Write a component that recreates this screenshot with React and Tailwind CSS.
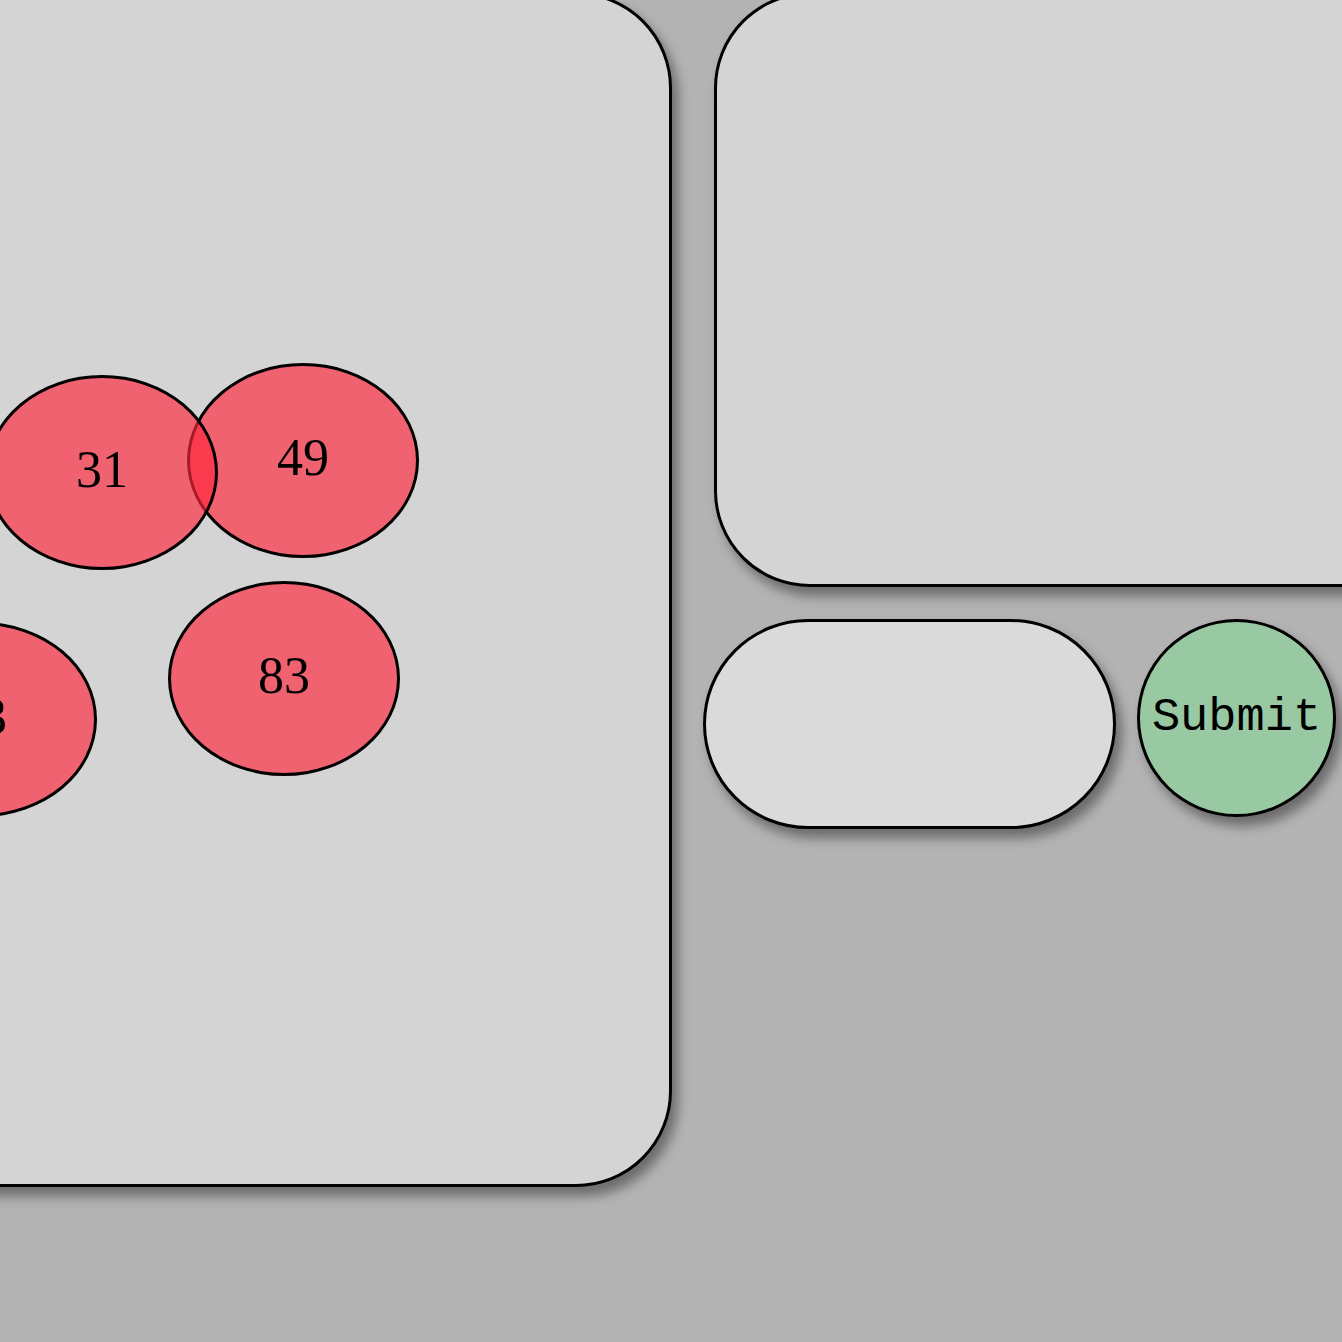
import React from "react";

const bubbles = [
  { id: "a", label: "23", left: 12, top: 627 },
  { id: "b", label: "83", left: 315, top: 586 },
  { id: "c", label: "49", left: 334, top: 368 },
  { id: "d", label: "31", left: 133, top: 380 },
];

export default function App() {
  return (
    <div className="w-[1342px] h-[1342px] overflow-hidden bg-[#b3b3b3]">
      <div className="flex items-start gap-[31px] -ml-[150px] -mt-[8px]">
        {/* board */}
        <div className="relative shrink-0 w-[822px] h-[1195px] rounded-[96px] border-[3px] border-black bg-[#d4d4d4] shadow-[6px_9px_12px_rgba(0,0,0,0.4)]">
          {bubbles.map((b) => (
            <div
              key={b.id}
              className="absolute w-[232px] h-[195px] rounded-[50%] border-[3px] border-black bg-[rgba(255,40,60,0.66)] flex items-center justify-center pb-[6px] text-[52px] text-black font-['Liberation_Serif',serif]"
              style={{ left: b.left, top: b.top }}
            >
              {b.label}
            </div>
          ))}
        </div>

        {/* side */}
        <div className="flex flex-col gap-[32px] shrink-0">
          <div className="ml-[11px] w-[760px] h-[595px] rounded-[96px] border-[3px] border-black bg-[#d4d4d4] shadow-[6px_9px_12px_rgba(0,0,0,0.4)]" />
          <div className="flex items-start gap-[21px]">
            <input
              type="text"
              className="w-[413px] h-[210px] rounded-full border-[3px] border-black bg-[#dadada] shadow-[6px_9px_12px_rgba(0,0,0,0.4)] outline-none px-10"
            />
            <button className="w-[199px] h-[198px] rounded-[50%] border-[3px] border-black bg-[#98c9a2] shadow-[6px_9px_12px_rgba(0,0,0,0.4)] flex items-center justify-center text-[47px] text-black font-['Nimbus_Mono_PS','Courier','Liberation_Mono',monospace] whitespace-nowrap">
              Submit
            </button>
          </div>
        </div>
      </div>
    </div>
  );
}
